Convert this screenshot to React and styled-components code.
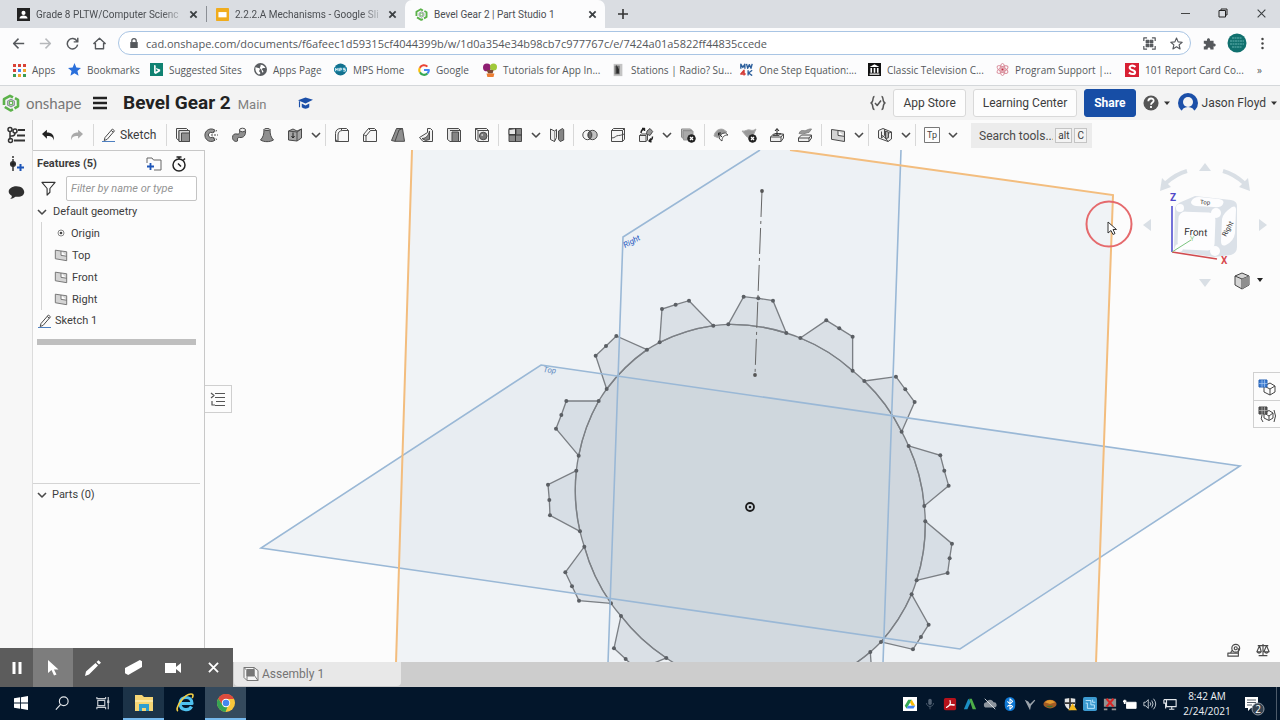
import styled, { createGlobalStyle, css } from 'styled-components';

const chromeFont = '"Open Sans", "Noto Sans", sans-serif';
const appFont = 'Roboto, "Liberation Sans", sans-serif';

const GlobalStyle = createGlobalStyle`
  * {
    box-sizing: border-box;
  }
  body {
    margin: 0;
    overflow: hidden;
  }
  button,
  input {
    font: inherit;
    color: inherit;
  }
  button {
    background: none;
    border: 0;
    padding: 0;
  }
  a {
    color: inherit;
    text-decoration: none;
  }
  svg {
    display: block;
    flex: none;
  }
`;

const Screen = styled.div`
  display: flex;
  flex-direction: column;
  height: 100vh;
  font-family: ${appFont};
  font-size: 12px;
  color: #3c3c3c;
  background: #fcfcfc;
`;

/* ---------- browser ---------- */

const TabStrip = styled.div`
  display: flex;
  flex: none;
  height: 28px;
  background: #dadde2;
  font-family: ${appFont};
  font-size: 10px;
  color: #4b4e52;
`;

const Tab = styled.div`
  display: flex;
  align-items: center;
  gap: 6px;
  width: ${props => props.$w}px;
  padding: 0 5px 0 ${props => props.$pad}px;
  ${props => props.$active && css`
    background: #fcfcfd;
    border-radius: 7px 7px 0 0;
  `}
  ${props => props.$divider && css`
    border-right: 1px solid #8b8f95;
    height: 16px;
    margin-top: 6px;
  `}
`;

const TabLabel = styled.span`
  flex: 1;
  min-width: 0;
  white-space: nowrap;
  ${props => props.$fade && css`
    mask-image: linear-gradient(to right, #000 88%, #0004);
  `}
`;

const IconButton = styled.button`
  display: flex;
  align-items: center;
  justify-content: center;
  flex: none;
  width: ${props => props.$w || 16}px;
  height: ${props => props.$h || 16}px;
`;

const WindowButtons = styled.div`
  display: flex;
  align-items: center;
  margin-left: auto;
  height: 26px;
`;

const AddressRow = styled.div`
  display: flex;
  align-items: center;
  flex: none;
  height: 30px;
  padding: 0 5px;
  background: #fcfcfd;
`;

const UrlBox = styled.div`
  display: flex;
  align-items: center;
  flex: 1;
  height: 24px;
  margin: 0 5px;
  padding: 0 0 0 10px;
  border: 1px solid #a9c5e4;
  border-radius: 12px;
  background: #fff;
  font-family: ${chromeFont};
  font-size: 11px;
`;

const UrlInput = styled.input`
  flex: 1;
  min-width: 0;
  margin-left: 7px;
  padding: 0;
  border: 0;
  outline: 0;
  background: none;
  color: #55585c;
`;

const Bookmarks = styled.nav`
  display: flex;
  align-items: center;
  flex: none;
  height: 28px;
  padding: 0 12px 4px;
  border-bottom: 1px solid #d4d7da;
  background: #fcfcfd;
  font-family: ${chromeFont};
  font-size: 10px;
  color: #55585b;
`;

const Bookmark = styled.a`
  display: flex;
  align-items: center;
  gap: 6px;
  flex: 0 0 ${props => props.$w}px;
  white-space: nowrap;
`;

/* ---------- document header ---------- */

const DocHeader = styled.header`
  display: flex;
  align-items: center;
  flex: none;
  height: 34px;
  padding: 0 2px;
  background: #f3f3f3;
`;

const Brand = styled.span`
  width: 66px;
  margin-left: 6px;
  font-family: Lato, sans-serif;
  font-size: 15px;
  color: #777;
`;

const DocTitle = styled.h1`
  margin: 0 7px 0 15px;
  font-size: 19px;
  line-height: 24px;
  font-weight: 700;
  color: #222;
`;

const Workspace = styled.span`
  width: 60px;
  padding-top: 3px;
  font-size: 13px;
  color: #808080;
`;

const HeaderRight = styled.div`
  display: flex;
  align-items: center;
  margin-left: auto;
`;

const HeaderButton = styled.button`
  height: 28px;
  margin-left: 7px;
  padding: 0 9px;
  border: 1px solid ${props => (props.$primary ? '#174ea6' : '#d9d9d9')};
  border-radius: 3px;
  background: ${props => (props.$primary ? '#174ea6' : '#fdfdfd')};
  color: ${props => (props.$primary ? '#fff' : '#3c3c3c')};
  font-weight: ${props => (props.$primary ? 700 : 400)};
`;

const UserButton = styled.button`
  display: flex;
  align-items: center;
  gap: 4px;
  margin-left: 7px;
`;

/* ---------- toolbar ---------- */

const Toolbar = styled.div`
  display: flex;
  align-items: stretch;
  flex: none;
  height: 30px;
  background: #fbfbfb;
`;

const RailHead = styled.div`
  display: flex;
  align-items: center;
  justify-content: center;
  width: 33px;
  border-right: 1px solid #d0d0d0;
  background: #f7f7f7;
`;

const ToolGroup = styled.div`
  display: flex;
  align-items: center;
  padding: 0 2px;
  border-right: 1px solid ${props => (props.$last ? 'transparent' : '#d8d8d8')};
  height: 22px;
  margin-top: 4px;
`;

const SketchButton = styled.button`
  display: flex;
  align-items: center;
  gap: 3px;
  width: 68px;
  padding-left: 5px;
`;

const SearchBox = styled.label`
  display: flex;
  align-items: center;
  gap: 2px;
  width: 121px;
  height: 25px;
  margin: 3px 0 0 8px;
  padding: 0 5px 0 8px;
  background: #ececec;
`;

const SearchInput = styled.input`
  flex: 1;
  min-width: 0;
  padding: 0;
  border: 0;
  outline: 0;
  background: none;
  &::placeholder {
    color: #4a4a4a;
    opacity: 1;
  }
`;

const Key = styled.kbd`
  padding: 0 2px;
  border: 1px solid #c4c4c4;
  background: #f3f3f3;
  font-family: ${appFont};
  font-size: 10px;
  line-height: 13px;
`;

/* ---------- workspace ---------- */

const Work = styled.main`
  display: flex;
  flex: 1;
  min-height: 0;
`;

const Rail = styled.div`
  display: flex;
  flex-direction: column;
  align-items: center;
  flex: none;
  width: 33px;
  border-right: 1px solid #dcdcdc;
  background: #f7f7f7;
`;

const Panel = styled.aside`
  display: flex;
  flex-direction: column;
  flex: none;
  width: 172px;
  border-top: 1px solid #c8c8c8;
  border-right: 1px solid #c8c8c8;
  background: #fcfcfc;
  font-size: 11px;
`;

const PanelHead = styled.div`
  display: flex;
  align-items: center;
  height: 25px;
  padding: 0 13px 0 4px;
`;

const PanelTitle = styled.h2`
  flex: 1;
  margin: 0;
  font-size: 11px;
  font-weight: 700;
`;

const FilterRow = styled.div`
  display: flex;
  align-items: center;
  gap: 10px;
  height: 25px;
  padding: 0 7px 0 8px;
`;

const FilterInput = styled.input`
  flex: 1;
  min-width: 0;
  height: 25px;
  padding: 0 4px;
  border: 1px solid #c4c4c4;
  border-radius: 2px;
  outline: 0;
  background: #fff;
  font-style: italic;
  &::placeholder {
    color: #949494;
    opacity: 1;
  }
`;

const Tree = styled.ul`
  margin: 0;
  padding: 0;
  list-style: none;
`;

const Branch = styled(Tree)`
  margin-left: 8px;
  border-left: 1px solid #d4d4d4;
`;

const TreeRow = styled.li`
  display: flex;
  align-items: center;
  gap: ${props => props.$gap || 4}px;
  height: ${props => (props.$parent ? 21 : 22)}px;
  padding-left: ${props => props.$indent}px;
`;

const RollbackBar = styled.div`
  flex: none;
  height: 6px;
  margin: 8px 8px 0 4px;
  background: #bfbfbf;
`;

const PartsHead = styled.div`
  display: flex;
  align-items: center;
  gap: 5px;
  height: 22px;
  margin: 138px 4px 0 0;
  padding-left: 4px;
  border-top: 1px solid #d4d4d4;
`;

const Viewport = styled.section`
  flex: 1;
  min-width: 0;
  position: relative;
  overflow: hidden;
`;

const Scene = styled.svg`
  width: 100%;
  height: 100%;
`;

const Floating = styled.div`
  position: absolute;
  top: ${props => props.$top}px;
  ${props => (props.$left === undefined ? `right: ${props.$right}px;` : `left: ${props.$left}px;`)}
`;

const ListTab = styled.button`
  display: flex;
  align-items: center;
  justify-content: center;
  width: 27px;
  height: 28px;
  border: 1px solid #cfcfcf;
  border-left: 0;
  background: #fcfcfc;
`;

const SideButtons = styled.div`
  display: flex;
  flex-direction: column;
  border: 1px solid #d0d0d0;
  border-right: 0;
  background: #fcfcfc;
`;

const SideButton = styled(IconButton)`
  width: 26px;
  height: 27px;
  & + & {
    border-top: 1px solid #d0d0d0;
  }
`;

const Measure = styled.div`
  display: flex;
  gap: 13px;
  position: absolute;
  right: 9px;
  bottom: 4px;
`;

const DocTabs = styled.div`
  display: flex;
  flex: none;
  height: 25px;
  padding-left: 234px;
  background: #cdcdcd;
`;

const DocTab = styled.button`
  display: flex;
  align-items: center;
  gap: 3px;
  width: 167px;
  height: 24px;
  padding-left: 9px;
  border-radius: 0 0 4px 4px;
  background: #e8e8e8;
  color: #747474;
`;

/* ---------- recorder and taskbar ---------- */

const Recorder = styled.div`
  display: flex;
  position: absolute;
  left: 0;
  bottom: 33px;
  height: 39px;
  background: #5c5c5c;
`;

const RecorderButton = styled.button`
  display: flex;
  align-items: center;
  justify-content: center;
  width: ${props => props.$w || 40}px;
  background: ${props => (props.$active ? '#7d7d7d' : 'none')};
`;

const Taskbar = styled.footer`
  display: flex;
  flex: none;
  height: 33px;
  background: #03162b;
  font-family: ${chromeFont};
  color: #eef1f4;
`;

const TaskButton = styled.button`
  display: flex;
  align-items: center;
  justify-content: center;
  width: 41px;
  border-bottom: 2px solid ${props => (props.$open ? '#76b9ed' : 'transparent')};
  background: ${props => (props.$open ? props.$open : 'none')};
`;

const Tray = styled.div`
  display: flex;
  align-items: center;
  margin-left: auto;
`;

const TrayButton = styled(IconButton)`
  width: 20px;
`;

const Clock = styled.time`
  display: flex;
  flex-direction: column;
  align-items: center;
  width: 54px;
  font-size: 10px;
  line-height: 15px;
`;

const Notice = styled.button`
  width: 43px;
  height: 33px;
  margin-right: 3px;
  padding-left: 10px;
  border-right: 1px solid #4c5a69;
`;

/* ---------- icons ---------- */

function Icon({ size = 16, box = 16, color = '#4a4a4a', width = 1, fill = 'none', children }) {
  return (
    <svg
      width={size}
      height={size}
      viewBox={`0 0 ${box} ${box}`}
      fill={fill}
      stroke={color}
      strokeWidth={width}
      strokeLinejoin="round"
      aria-hidden="true"
    >
      {children}
    </svg>
  );
}

const Cross = ({ size = 10, color = '#3c4043', width = 2 }) => (
  <Icon size={size} box={10} color={color} width={width}><path d="M1.5 1.5l7 7M8.5 1.5l-7 7" /></Icon>
);

const Caret = () => (
  <Icon size={10} box={10} color="#4a4a4a" width={1.6}><path d="M1 3l4 4 4-4" /></Icon>
);

const Triangle = () => (
  <Icon size={8} box={8} color="none" fill="#333"><path d="M1 2.5h6L4 6z" /></Icon>
);

const Logo = ({ size = 18 }) => (
  <Icon size={size} box={18} color="#5cb24a" width={2.6}>
    <path d="M2 11V5.2L8 1.8l3 1.6M13 4.2l3 1.7v6.4l-3.5 2M11 15.4l-2.4 1.1L2.8 13" />
    <path d="M9 5.3l3.300 1.900v3.700L9 12.800l-3.300-1.900V7.200z" stroke="#8b9299" strokeWidth="1.300" />
    <circle cx="9" cy="9" r="1.800" stroke="#5cb24a" strokeWidth="1.200" />
  </Icon>
);

const Pencil = () => (
  <Icon>
    <path d="M4 10.500L11.400 2l2.100 1.800-7.400 8.600-2.900 1.100zM10.200 3.400l2.100 1.800" />
    <path d="M1 14.500h13" stroke="#4d7fc0" />
  </Icon>
);

const tools = {
  extrude: <><path d="M1.500 1.500h10l2 2H4v10l-2.500-2z" fill="#f4f4f4" /><path d="M4 3.500h10.500v11H4z" fill="#d8d8d8" /><path d="M6.500 6h8v8.500h-8z" fill="#8f8f8f" /></>,
  revolve: <><path d="M12 3.200A6.300 6.300 0 1 0 12 13.200L9.600 10A2.600 2.600 0 1 1 9.600 6z" fill="#949494" /><path d="M8 8h7M10 5.500l4-2M10 10.500l4 2" strokeDasharray="2 1" /></>,
  sweep: <><path d="M1.500 10.500c0-3 2-4 4.500-3.500 3 .5 2.500-1.500 2.500-4h6c.5 5-1.500 8-6 7.500-2-.3-2 .5-2 3.500-1.500 1.200-5 0-5-3.500z" fill="#8f8f8f" /><ellipse cx="11.500" cy="3" rx="3" ry="1.800" fill="#eee" /></>,
  loft: <><path d="M5 2.500c0 5-1 8-3.500 10.500 3.500 2.200 9.500 2.200 13 0C12 10.500 11 7.500 11 2.500z" fill="#8f8f8f" /><ellipse cx="8" cy="2.500" rx="3" ry="1" fill="#ddd" /></>,
  thicken: <><path d="M1.500 4l4.500-2 4 2 4.500-2v9L10 14l-8.500-1z" fill="#a6a6a6" /><path d="M1.500 4l8.500 1 4.500-3M10 5v9" /><path d="M6 5.500v5M4.500 9L6 11l1.500-2" stroke="#222" /></>,
  fillet: <><path d="M1.500 14.500V6.500C1.500 3 4 1.500 6.500 1.500h6l2 2v11z" fill="#f7f7f7" /><path d="M4 14.500V8c0-3 2-4.500 4.500-4.500h6M1.500 12.500l2.500 2M6.500 1.500l2 2" /></>,
  chamfer: <><path d="M1.500 14.500V7.500l5-6h6l2 2v11z" fill="#f7f7f7" /><path d="M4 14.500V9l4.500-5.500h6M1.500 7.500L4 9M6.500 1.500l2 2" /></>,
  draft: <><path d="M1.500 13.500l5-12h6l2 12.800H5z" fill="#8f8f8f" /><path d="M5 14.300L9 3l3.500-1.500" /></>,
  rib: <><path d="M1.500 10.500l8-5V1.500h3l2 2v11H5z" fill="#f2f2f2" /><path d="M4 11.500c3.500 0 6.500-2.500 7.500-7.500v8.500l-4 1z" fill="#858585" /></>,
  shell: <><path d="M1.500 1.500h11l2 2v11H4l-2.500-2z" fill="#e4e4e4" /><path d="M4 3.500h10.500v11" /><path d="M6 5h6.500v9.500H6z" fill="#858585" /></>,
  hole: <><path d="M1.500 1.500h11l2 2v11H4l-2.500-2zM1.500 1.500L4 3.500v11M4 3.500h10.500" fill="#f2f2f2" /><circle cx="9.200" cy="9" r="3.800" fill="#777" /><circle cx="8.200" cy="8" r="1" fill="#ccc" stroke="none" /></>,
  pattern: <><path d="M2 1.500h12.500v13H2z" fill="#888" /><path d="M9 1.500v6H2v-5z" fill="#e6e6e6" /><path d="M2 8h12.500M8.500 1.500v13" stroke="#333" /></>,
  mirror: <><path d="M1.500 2l4 2v10.500l-4-2z" fill="#eee" /><path d="M5.500 4l2-1.500v8l-2 4" fill="#ddd" /><path d="M9.500 4l4-2.500 1.200 1v10.500l-3.500 1.500-1.700-2z" fill="#858585" /></>,
  boolean: <><circle cx="5.500" cy="8" r="4.700" fill="#f5f5f5" /><circle cx="10.500" cy="8" r="4.700" fill="#aaa" fillOpacity=".7" /><path d="M8 4c2 2.500 2 5.500 0 8-2-2.500-2-5.500 0-8z" fill="#777" /></>,
  split: <><path d="M1.500 3.500l2-2h11v10.800l-2 2.200h-11z" fill="#f5f5f5" /><path d="M1.500 3.500h11v11M12.500 3.500l2-2M1.500 11c4 0 4-2.500 7-2.500s3-1 6-1.500" /></>,
  transform: <><path d="M1.500 8.500l2-1.500h6v6l-1.500 1.500H1.500zM1.500 8.500H8v6" fill="#eee" /><path d="M9 4l3-2.500 2.700 3-2.700 4-3.500-1.500z" fill="#999" /><path d="M3 6c0-2 1-3.500 3-4M4 1.500h2.500V4M14.500 9.500c0 2-1 4-3.500 4.500M13 11.500l-2 2.500 2.500 1" stroke="#222" strokeWidth="1.400" /></>,
  deletePart: <><path d="M1.500 2h9l1.500 1.500h-9v8L1.500 10z" fill="#ccc" stroke="#888" /><path d="M3.500 4h9.500v9H3.500z" fill="#aaa" stroke="#999" /><circle cx="11.500" cy="11.500" r="3.800" fill="#222" stroke="#222" /><path d="M10 10l3 3m0-3l-3 3" stroke="#fff" strokeWidth="1.300" /></>,
  modifyFillet: <><path d="M1 9C2 4 6 1 10.500 2.500L14 5 9 7 5.500 11z" fill="#999" stroke="#aaa" /><path d="M9 14c0-4 2-6 6-6l-2.500-2c-4 0-6 2-6 6z" fill="#fff" /><path d="M9 10L5.500 6M5.500 8.500V6H8" stroke="#222" /></>,
  deleteFace: <><path d="M1 4c3 1 5-2 8-1s4 0 6-1l-4 9-5-1z" fill="#999" stroke="#aaa" /><circle cx="11.500" cy="11.500" r="3.800" fill="#222" stroke="#222" /><path d="M10 10l3 3m0-3l-3 3" stroke="#fff" strokeWidth="1.300" /></>,
  moveFace: <><path d="M1.500 10l3-3h10v4L12 14.500H1.500z" fill="#eee" /><path d="M1.500 10H12v4.500M12 10l2.500-3" /><path d="M4 8.500l2-2h6l-2 2z" fill="#999" /><path d="M8 8V2M6 4l2-2.500L10 4" stroke="#222" /></>,
  replaceFace: <><path d="M1.500 11l3-3h10v3L12 14.500H1.500zM1.500 11H12v3.500M12 11l2.500-3" fill="#eee" /><path d="M2 6.500c2-5 5-2 7-3s3-1.500 5.500-1.500L12 5.500c-3 0-4 2-10 1z" fill="#999" stroke="#888" /></>,
  plane: <path d="M1.500 2.500l13 1.800v10.200l-13-2.200zM8 3.400v5l6.500 1" fill="#d4d4d4" />,
  frame: <><path d="M1.500 3.500L6 1.500l8.500 3.500v7L11 14.500 1.500 11z" fill="#eee" /><path d="M4.500 4.500v6.500l3-2.500V2.200M8.500 4v7l2.500 3.500M8.500 7.500L14.500 5M4.500 8l4 3" /><path d="M8.500 4l3 1.200v5.500l-3 1z" fill="#aaa" /></>,
  custom: <><path d="M.500.500h15v15H.500z" fill="#fdfdfd" stroke="#777" /><text x="8" y="11" textAnchor="middle" fontSize="9" fill="#444" stroke="none">Tp</text></>,
};

const toolGroups = [
  { names: ['extrude', 'revolve', 'sweep', 'loft', 'thicken'], more: true },
  { names: ['fillet', 'chamfer', 'draft', 'rib', 'shell', 'hole'] },
  { names: ['pattern', null, 'mirror'] },
  { names: ['boolean', 'split', 'transform', null, 'deletePart'] },
  { names: ['modifyFillet', 'deleteFace', 'moveFace', 'replaceFace'] },
  { names: ['plane'], more: true },
  { names: ['frame'], more: true },
  { names: ['custom'], more: true },
];

const MoreButton = () => <IconButton $w={14} aria-label="More"><Caret /></IconButton>;

const bookmarks = [
  ['Apps', 56, <Icon box={14} size={14} color="none"><path d="M1 1h3v3H1zM1 6h3v3H1z" fill="#d94236" /><path d="M6 1h3v3H6zM11 1h3v3h-3z" fill="#d94236" /><path d="M6 6h3v3H6z" fill="#4285f4" /><path d="M11 6h3v3h-3zM6 11h3v3H6z" fill="#f2a52c" /><path d="M1 11h3v3H1zM11 11h3v3h-3z" fill="#3a9c54" /></Icon>],
  ['Bookmarks', 82, <Icon size={13} color="none" fill="#2a6fdb"><path d="M8 0l2.300 5.500 5.700.5-4.400 3.800 1.400 6L8 12.500 3 15.800l1.400-6L0 6l5.700-.5z" /></Icon>],
  ['Suggested Sites', 104, <Icon size={13} color="none"><path d="M0 0h16v16H0z" fill="#108272" /><path d="M5 2.500l2 .7v7.500l3-1.700-2-1-.7-2L12.500 8v2L7 13.500l-2-1.200z" fill="#fff" /></Icon>],
  ['Apps Page', 80, <Icon size={13} color="none"><circle cx="8" cy="8" r="8" fill="#5a5d61" /><path d="M2 5c3 2 4 0 5 2s-2 2 0 4 0 3-1 3C3 13 1 9 2 5zM8 2c3 0 5 2 6 4-2 1-3-1-4 1s3 2 1 5c-2-1-1-4-3-5s1-3 0-5z" fill="#fff" /></Icon>],
  ['MPS Home', 84, <Icon size={13} color="none"><circle cx="8" cy="8" r="7.500" fill="#12718f" /><path d="M0 5.500h16v5H0z" fill="#1c86a8" /><path d="M2 10V6.500l1.500 2 1.500-2V10M7 10V6.500h2v2H7M14 6.500h-2.500V8H14v2h-2.500" stroke="#fff" /></Icon>],
  ['Google', 65, <Icon size={12} width={2.8} color="#4285f4"><path d="M8 8h6.500A6.400 6.400 0 0 1 12.500 12.700" /><path d="M12.500 12.700A6.300 6.300 0 0 1 2.500 11" stroke="#34a853" /><path d="M2.500 11a6.300 6.300 0 0 1 0-6" stroke="#fbbc05" /><path d="M2.500 5a6.300 6.300 0 0 1 10-1.500" stroke="#ea4335" /></Icon>],
  ['Tutorials for App In...', 128, <Icon size={14} color="none"><circle cx="4.500" cy="5" r="4.500" fill="#8e1e72" /><circle cx="12" cy="4.500" r="4" fill="#a0c93a" /><path d="M4 8l8 0-1 4H6z" fill="#7c4a35" /><path d="M4 12h9l-1 4H5z" fill="#ed7d31" /></Icon>],
  ['Stations | Radio? Su...', 129, <Icon size={14} color="none"><path d="M3 1h10v14H3z" fill="#c4c4c4" /><path d="M4 3h6v10H4z" fill="#777" /><path d="M6 2l3 5v5H6z" fill="#2c2c2c" /></Icon>],
  ['One Step Equation:...', 128, <Icon size={13} color="#2c5f9c" width={1.7}><path d="M1 7V1.500l2.500 4 2.500-4V7M8 1l1.500 5.500L11.500 2l2 4.500L15 1M10 9v6.500M15 9l-4.500 3.300L15 15.500" /><path d="M5 15.500V9l-4 4.500h6" stroke="#d33b36" /></Icon>],
  ['Classic Television C...', 128, <Icon size={13} color="none"><path d="M0 0h16v16H0z" fill="#111" /><path d="M8 1.500L14 5H2zM3 6h2v6H3zM7 6h2v6H7zM11 6h2v6h-2zM2 13h12v1.500H2z" fill="#fff" /></Icon>],
  ['Program Support |...', 129, <Icon size={13} color="#d88a98" width={1.2}><ellipse cx="8" cy="8" rx="3" ry="7.500" /><ellipse cx="8" cy="8" rx="3" ry="7.500" transform="rotate(60 8 8)" /><ellipse cx="8" cy="8" rx="3" ry="7.500" transform="rotate(120 8 8)" /><circle cx="8" cy="8" r="1.500" fill="#c8283c" /></Icon>],
  ['101 Report Card Co...', 132, <Icon size={14} color="none"><path d="M0 0h16v16H0z" fill="#d81f33" /><path d="M12 4.500C9 2 4.500 3 5.500 6s6 1.500 6 4.500-4.500 2.500-7 .5" stroke="#fff" strokeWidth="2.400" /></Icon>],
];

/* ---------- model ---------- */

// gear teeth: root, tip, middle of the tip, tip, root
const teeth = [
  [[389, 184], [396, 84], [437, 71], [477, 59], [550, 134]],
  [[595, 130], [641, 47], [685, 52], [729, 59], [769, 156]],
  [[811, 171], [889, 118], [928, 142], [968, 167], [968, 269]],
  [[1003, 300], [1098, 287], [1126, 325], [1154, 363], [1115, 452]],
  [[1136, 495], [1231, 523], [1243, 569], [1256, 614], [1183, 675]],
  [[1186, 721], [1266, 788], [1259, 832], [1253, 876], [1160, 898]],
  [[1145, 940], [1196, 1031], [1173, 1068], [1149, 1105], [1053, 1083]],
  [[1021, 1113], [1028, 1212], [990, 1236], [950, 1260], [880, 1200]],
  [[409, 1131], [322, 1167], [287, 1134], [252, 1102], [273, 1005]],
  [[243, 967], [147, 959], [126, 916], [106, 874], [163, 797]],
  [[150, 751], [60, 703], [58, 657], [54, 611], [139, 569]],
  [[146, 524], [78, 443], [94, 402], [109, 360], [206, 360]],
  [[230, 324], [197, 224], [228, 195], [259, 165], [351, 206]],
];

const rim = teeth.flatMap(t => [t[0], t[4]]);
const rimPath = `M${rim[0]}` + rim.slice(1).map(p => `A540 540 0 0 1 ${p}`).join('') + `A540 540 0 0 1 ${rim[0]}`;

function Model() {
  return (
    <Scene viewBox="205 149 1075 513" preserveAspectRatio="xMinYMin slice" role="img" aria-label="Bevel gear sketch">
      <g fill="#d9e3ec" fillOpacity=".35">
        <path d="M412 149H790L1113 194 1096 662H396z" />
        <path d="M760 149L623 236 608 662H883L901 149z" fillOpacity=".1" />
        <path d="M541 364l699 101-280 183-699-101z" />
      </g>
      <g transform="translate(530 280) scale(.3333)" stroke="#7b7f84" strokeWidth="4">
        <path d={rimPath} fill="#b8c1c9" fillOpacity=".5" />
        {teeth.map((t, i) => (
          <path
            key={i}
            d={`M${t.join('L')}A540 540 0 0 0 ${t[0]}`}
            fill="#c3ccd4"
            fillOpacity=".45"
          />
        ))}
        {teeth.flat().map(([x, y]) => <circle key={`${x}-${y}`} cx={x} cy={y} r="6" fill="#5b5f64" stroke="none" />)}
      </g>
      <g fill="none" stroke="#9ab8d6" strokeWidth="1.600">
        <path d="M760 149L623 236 608 662M901 149L883 662" />
        <path d="M541 364l699 101-280 183-699-101z" />
      </g>
      <path d="M412 149L396 662M790 149L1113 194 1096 662" fill="none" stroke="#f3bd7e" strokeWidth="2" />
      <path d="M762 190L755 374" stroke="#666" strokeDasharray="26 4 3 4" />
      <circle cx="762" cy="190" r="1.900" fill="#555" />
      <circle cx="755" cy="374" r="1.900" fill="#555" />
      <circle cx="750" cy="506" r="4" fill="none" stroke="#1c1c1c" strokeWidth="1.800" />
      <circle cx="750" cy="506" r="1.300" fill="#1c1c1c" />
      <g fontSize="8" fontStyle="italic">
        <text x="625" y="247" transform="rotate(-28 625 247)" fill="#2358c0">Right</text>
        <text x="543" y="371" transform="rotate(6 543 371)" fill="#5c88c0">Top</text>
      </g>
    </Scene>
  );
}

const ViewCube = () => (
  <svg width="130" height="140" viewBox="1140 155 130 140" aria-label="View cube">
    <g fill="#d9dfe5">
      <path d="M1199 170l6-8 6 8zM1199 278h12l-6 8zM1151 218v12l-8-6zM1259 218v12l8-6z" />
      <path d="M1160 190l2-13 9 9zM1250 190l-2-13-9 9z" />
    </g>
    <path d="M1166 182q10-9 21-12M1244 182q-10-9-21-12" fill="none" stroke="#d9dfe5" strokeWidth="4" />
    <path d="M1175 207q1-4 6-6l14-6 36 4q6 1 6 6v41q0 6-6 8l-17 2-35-5q-5-1-5-6z" fill="#dbe1e8" />
    <g fill="#fdfdfe">
      <rect x="1178" y="211" width="37" height="38" rx="7" transform="rotate(2 1196 230)" />
      <path d="M1191 201q2-5 8-5l20 2q6 1 4 5-2 4-9 3l-18-1q-5-1-5-4zM1222 218q1-6 10-12 4-2 4 3l-1 23q-1 8-9 12-5 2-5-4z" />
      <circle cx="1180" cy="207" r="4" />
      <circle cx="1216" cy="212" r="5" />
      <circle cx="1215" cy="250" r="5" />
      <circle cx="1179" cy="247" r="4" />
    </g>
    <path d="M1172 251V205" stroke="#514fd0" strokeWidth="1.600" />
    <path d="M1172 251l45 7" stroke="#d14b4f" strokeWidth="1.600" />
    <path d="M1172 251l19-12" stroke="#7bc47e" />
    <g fontSize="10" fill="#333">
      <text x="1184" y="234" transform="rotate(3 1184 234)">Front</text>
      <text x="1200" y="203" fontSize="6" transform="rotate(4 1200 203)">Top</text>
      <text x="1226" y="236" fontSize="7" transform="rotate(-62 1226 236)">Right</text>
      <text x="1170" y="200" fontWeight="700" fill="#5048c8">Z</text>
      <text x="1221" y="263" fontWeight="700" fill="#d84a50">X</text>
      <text x="1190" y="240" fontSize="7" fill="#8fce92">Y</text>
    </g>
    <path d="M1235 275l7-3 7 3v9l-7 4-7-4z" fill="#d5d5d5" stroke="#444" />
    <path d="M1235 275l7 3 7-3M1242 278v10" fill="none" stroke="#444" />
    <path d="M1242 278l7-3v9l-7 4z" fill="#8f8f8f" />
    <path d="M1257 277h6l-3 4z" fill="#222" />
  </svg>
);

const Cursor = () => (
  <svg width="48" height="48" viewBox="0 0 48 48" aria-hidden="true">
    <circle cx="24" cy="24" r="22.500" fill="none" stroke="#e56a6d" strokeWidth="2" />
    <path d="M23 22v11l3-2.500 2 4 2-1-2-4h3.500z" fill="#fff" stroke="#333" />
  </svg>
);

const trayIcons = [
  ['Drive', <><path d="M0 0h16v16H0z" fill="#fff" /><path d="M6 3h4L6 10l-2 3-2-3z" fill="#34a853" /><path d="M10 3l4 7h-4L8 6z" fill="#fbbc05" /><path d="M4 13l2-3h8l-2 3z" fill="#4285f4" /></>],
  ['Microphone', <><rect x="6" y="2" width="4" height="7" rx="2" fill="#536274" /><path d="M4 7c0 5 8 5 8 0M8 11v3" stroke="#536274" /></>],
  ['Acrobat', <><rect x="1" y="1" width="14" height="14" rx="2" fill="#b5121b" /><path d="M4 12c4-2 5-5 4-8 0 4 2 6 5 5-3-1-6 0-9 3z" stroke="#fff" strokeWidth="1.300" /></>],
  ['Autodesk', <><path d="M1 14L6 2l3 3-4 9z" fill="#1c8fc4" /><path d="M7 2h3l5 12h-4z" fill="#4eae48" /></>],
  ['Offline', <><path d="M4 12a3 3 0 0 1 0-6c1-4 7-4 8 0a3 3 0 0 1 1 6z" fill="#8d959e" /><path d="M2 2l12 12" stroke="#dfe3e7" /></>],
  ['Bluetooth', <><rect x="2" y="0" width="12" height="16" rx="6" fill="#0f78d4" /><path d="M5 5l6 6-3 3V2l3 3-6 6" stroke="#fff" strokeWidth="1.200" /></>],
  ['Pointer', <path d="M2 3l4 2 2 3 5-5 1 1-5 6-1 5-2-4z" fill="#9ba3ab" />],
  ['Sync', <><ellipse cx="8" cy="8" rx="7.500" ry="5" fill="#a45c24" /><path d="M2 6q6-5 12 0l-6 2z" fill="#e09a32" /><path d="M3 10q5 4 9 0z" fill="#3b7133" /></>],
  ['Defender', <><path d="M2 2l6-1 6 1v5c0 4-3 6-6 8-3-2-6-4-6-8z" fill="#e4e4e4" /><path d="M8 1v14M2 7h12" stroke="#333" strokeWidth="2" /><path d="M11 7l5 8H6z" fill="#f4b91d" /></>],
  ['Display', <><rect x="0" y="0" width="16" height="16" rx="2" fill="#3c9ad0" /><path d="M3 4h6v5h4v4H5V7H3M11 3v3h3" stroke="#c9ebff" /></>],
  ['Network drive', <><path d="M1 2h14v9H1zM1 13h4v2H1zM10 13h5v2h-5z" fill="#929292" /><path d="M4 2l8 9M12 2l-8 9" stroke="#d72626" strokeWidth="2.400" /></>],
  ['Battery', <><path d="M4 6h11v7H4z" fill="#fff" stroke="#fff" /><path d="M0 5h4M2 3v5" stroke="#fff" strokeWidth="2" /></>],
  ['Volume', <path d="M1 6h2l3-3v10l-3-3H1zM8 6q2 2 0 4M10 4q3 4 0 8M12 2q5 6 0 12" stroke="#d4dae0" />],
  ['Network', <path d="M4 3h11v8H4zM7 14h6M10 11v3M1 3h3M1 3v4h2v6" stroke="#e2e6ea" strokeWidth="1.300" />],
];

export default function App() {
  return (
    <Screen>
      <GlobalStyle />

      <TabStrip>
        <Tab $w={207} $pad={17} $divider>
          <Icon size={13} color="none"><path d="M0 0h16v16H0z" fill="#222" /><circle cx="8" cy="6" r="2.500" fill="#fff" /><path d="M3 13c0-5 10-5 10 0z" fill="#fff" /></Icon>
          <TabLabel $fade>Grade 8 PLTW/Computer Science</TabLabel>
          <IconButton aria-label="Close tab"><Cross size={9} /></IconButton>
        </Tab>
        <Tab $w={198} $pad={9}>
          <Icon size={13} color="none"><rect width="16" height="16" rx="1" fill="#f0ac1d" /><path d="M3 5h10v6.500H3z" fill="#fff" /></Icon>
          <TabLabel $fade>2.2.2.A Mechanisms - Google Slid</TabLabel>
          <IconButton aria-label="Close tab"><Cross size={9} /></IconButton>
        </Tab>
        <Tab $w={200} $pad={10} $active>
          <Logo size={13} />
          <TabLabel>Bevel Gear 2 | Part Studio 1</TabLabel>
          <IconButton aria-label="Close tab"><Cross size={9} /></IconButton>
        </Tab>
        <IconButton $w={36} $h={28} aria-label="New tab">
          <Icon size={10} box={10} width={1.600} color="#333"><path d="M5 0v10M0 5h10" /></Icon>
        </IconButton>
        <WindowButtons>
          <IconButton $w={38} aria-label="Minimize"><Icon size={9} box={9} color="#444"><path d="M0 4.500h9" /></Icon></IconButton>
          <IconButton $w={38} aria-label="Restore"><Icon size={10} box={10} color="#222"><path d="M1 2.500h6.500V9H1zM3 2.500V1h6v6H7.500" /></Icon></IconButton>
          <IconButton $w={38} aria-label="Close"><Cross size={11} width={1} /></IconButton>
        </WindowButtons>
      </TabStrip>

      <AddressRow>
        <IconButton $w={27} aria-label="Back"><Icon size={13} color="#55585c" width={1.800}><path d="M15 8H2M8 2L2 8l6 6" /></Icon></IconButton>
        <IconButton $w={27} aria-label="Forward"><Icon size={13} color="#b6b8bb" width={1.800}><path d="M1 8h13M8 2l6 6-6 6" /></Icon></IconButton>
        <IconButton $w={27} aria-label="Reload"><Icon size={13} color="#55585c" width={1.800}><path d="M13.500 5A6.400 6.400 0 1 0 14.300 9.500M14.500 1v5h-5" /></Icon></IconButton>
        <IconButton $w={27} aria-label="Home"><Icon size={13} color="#55585c" width={1.700}><path d="M1 8l7-6.500L15 8h-2v6.500H3V8z" /></Icon></IconButton>
        <UrlBox>
          <Icon size={10} color="none" fill="#55585c"><path d="M2 6.500h12V16H2z" /><path d="M4.500 7V4.500a3.500 3.500 0 0 1 7 0V7" fill="none" stroke="#55585c" strokeWidth="2" /></Icon>
          <UrlInput aria-label="Address" defaultValue="cad.onshape.com/documents/f6afeec1d59315cf4044399b/w/1d0a354e34b98cb7c977767c/e/7424a01a5822ff44835ccede" />
          <IconButton $w={27} aria-label="QR code"><Icon size={13} color="#55585c" width={1.500}><path d="M1 5V1h4M11 1h4v4M15 11v4h-4M5 15H1v-4" /><path d="M4 4h3v3H4zM9 4h3v3H9zM4 9h3v3H4zM9 9h3v3H9z" fill="#55585c" /></Icon></IconButton>
          <IconButton $w={27} aria-label="Bookmark this page"><Icon size={13} color="#55585c" width={1.400}><path d="M8 1.200l2 4.800 5 .4-3.800 3.300 1.200 5L8 12l-4.400 2.700 1.200-5L1 6.400 6 6z" /></Icon></IconButton>
        </UrlBox>
        <IconButton $w={27} aria-label="Extensions"><Icon size={13} color="none" fill="#55585c"><path d="M1 4.500h4c-1-4 4.500-4 3.500 0H13V8c3.500-1 3.500 4.500 0 3.500V15.500H9c.8-3.500-4-3.500-3.200 0H1v-4c3.500.8 3.500-4 0-3.200z" /></Icon></IconButton>
        <IconButton $w={27} $h={20} aria-label="Profile"><Icon size={20} box={20} color="#7cc4c0" width={0.8}><circle cx="10" cy="10" r="9.500" fill="#10706e" stroke="none" /><path d="M5 5h10M3 8h14M3 11h14M5 14h10" strokeDasharray="2 .5" /></Icon></IconButton>
        <IconButton $w={25} aria-label="Menu"><Icon size={13} color="none" fill="#444"><circle cx="8" cy="2.500" r="1.500" /><circle cx="8" cy="8" r="1.500" /><circle cx="8" cy="13.500" r="1.500" /></Icon></IconButton>
      </AddressRow>

      <Bookmarks>
        {bookmarks.map(([label, w, icon]) => (
          <Bookmark key={label} href="#" $w={w}>{icon}{label}</Bookmark>
        ))}
        <span>»</span>
      </Bookmarks>

      <DocHeader>
        <Logo />
        <Brand>onshape</Brand>
        <IconButton aria-label="Document menu"><Icon size={14} box={14} color="#222" width={2.4}><path d="M0 2h14M0 7h14M0 12h14" /></Icon></IconButton>
        <DocTitle>Bevel Gear 2</DocTitle>
        <Workspace>Main</Workspace>
        <Icon size={15} color="none" fill="#1b4fa8"><path d="M8 1.500l8 2.500-8 4-8-3.500zM4 8l4 2 4-2v4c-2 2-6 2-8 0zM1 5.500h1.200V12H1z" /></Icon>
        <HeaderRight>
          <IconButton aria-label="Variables"><Icon color="#555" width={1.5}><path d="M4.500 1.500C2 1.500 4 7 1 8c3 1 .5 6.500 3.500 6.500M11.500 1.500C14 1.500 12 7 15 8c-3 1-.5 6.500-3.500 6.500M5 8l2.200 2.500L11 5.500" /></Icon></IconButton>
          <HeaderButton>App Store</HeaderButton>
          <HeaderButton>Learning Center</HeaderButton>
          <HeaderButton $primary>Share</HeaderButton>
          <UserButton aria-label="Help">
            <Icon box={18} color="none"><circle cx="9" cy="9" r="8.500" fill="#555" /><path d="M6 7c0-4 6-4 6-.5 0 2-3 2-3 4.500M9 12.500v2" stroke="#fff" strokeWidth="2" /></Icon>
            <Triangle />
          </UserButton>
          <UserButton>
            <Icon size={20} box={20} color="none"><circle cx="10" cy="10" r="10" fill="#1b4fa8" /><circle cx="10" cy="9" r="5" fill="#f3f3f3" /><path d="M3 20q1-6 7-6t7 6z" fill="#f3f3f3" /></Icon>
            Jason Floyd
            <Triangle />
          </UserButton>
        </HeaderRight>
      </DocHeader>

      <Toolbar>
        <RailHead>
          <Icon size={18} box={18} color="#333" width={1.5}><circle cx="3" cy="3.500" r="2" /><path d="M3 5.500v8M3 10h2q3 0 3-3" /><circle cx="8" cy="5" r="2" /><circle cx="3.500" cy="14.500" r="2" /><path d="M11 4h7M10 9.500h8M7 14.500h11" strokeWidth="1.800" /></Icon>
        </RailHead>
        <ToolGroup>
          <IconButton $w={26} aria-label="Undo"><Icon size={13} color="none" fill="#222"><path d="M0 6l6-5v3.200c6 0 9.500 3 8.500 9.800-1-4-3-5.500-8.500-5.300V12z" /></Icon></IconButton>
          <IconButton $w={30} aria-label="Redo"><Icon size={13} color="none" fill="#aaa"><path d="M16 6l-6-5v3.200C4 4.200.5 7.200 1.500 14c1-4 3-5.500 8.500-5.300V12z" /></Icon></IconButton>
        </ToolGroup>
        <ToolGroup>
          <SketchButton><Pencil />Sketch</SketchButton>
        </ToolGroup>
        {toolGroups.map((group, i) => (
          <ToolGroup key={i} $last={i === toolGroups.length - 1}>
            {group.names.map((name, j) => (
              name ? <IconButton key={name} $w={28} aria-label={name}><Icon>{tools[name]}</Icon></IconButton> : <MoreButton key={j} />
            ))}
            {group.more && <MoreButton />}
          </ToolGroup>
        ))}
        <SearchBox>
          <SearchInput placeholder="Search tools..." aria-label="Search tools" />
          <Key>alt</Key>
          <Key>C</Key>
        </SearchBox>
      </Toolbar>

      <Work>
        <Rail>
          <IconButton $w={32} $h={28} aria-label="Insert feature"><Icon color="#333" width={1.5}><path d="M5 0v3M5 13v3" strokeDasharray="2 1" /><path d="M5 3v10" /><circle cx="5" cy="8" r="2.300" fill="#222" /><path d="M12.500 8v7M9 11.500h7" stroke="#1d55b8" strokeWidth="2" /></Icon></IconButton>
          <IconButton $w={32} $h={28} aria-label="Comments"><Icon size={17} color="none" fill="#2f2f2f"><path d="M8 2c9 0 10 10 1 10H7q-2 2-5 2 2-1 1.500-3C-2 8 1 2 8 2z" /></Icon></IconButton>
        </Rail>

        <Panel>
          <PanelHead>
            <PanelTitle>Features (5)</PanelTitle>
            <IconButton $w={25} aria-label="Add folder"><Icon color="#666"><path d="M1 7V2h5l1.500 2H15v10H8" /><path d="M4.500 7v7M1 10.500h7" stroke="#1d55b8" strokeWidth="1.800" /></Icon></IconButton>
            <IconButton $w={25} aria-label="Regeneration times"><Icon color="#222" width={1.5}><circle cx="8" cy="9" r="6" /><path d="M8 3V1M5.500 1h5M12.500 4l1.500-1.500M7 7.500l3 3" /></Icon></IconButton>
          </PanelHead>
          <FilterRow>
            <Icon size={15} color="#333" width={1.2}><path d="M1 1.500h14L9.500 8v4L6.500 15V8z" /></Icon>
            <FilterInput placeholder="Filter by name or type" aria-label="Filter by name or type" />
          </FilterRow>
          <Tree>
            <TreeRow $indent={4} $gap={6} $parent><Caret />Default geometry</TreeRow>
            <Branch>
              <TreeRow $indent={11} $gap={2}>
                <Icon><circle cx="8" cy="8" r="3" stroke="#888" /><circle cx="8" cy="8" r="1.300" fill="#444" stroke="none" /></Icon>
                Origin
              </TreeRow>
              <TreeRow $indent={12}><Icon size={14} color="#6a6a6a">{tools.plane}</Icon>Top</TreeRow>
              <TreeRow $indent={12}><Icon size={14} color="#6a6a6a">{tools.plane}</Icon>Front</TreeRow>
              <TreeRow $indent={12}><Icon size={14} color="#6a6a6a">{tools.plane}</Icon>Right</TreeRow>
            </Branch>
            <TreeRow $indent={4} $gap={2} $parent><Pencil />Sketch 1</TreeRow>
          </Tree>
          <RollbackBar />
          <PartsHead><Caret />Parts (0)</PartsHead>
        </Panel>

        <Viewport>
          <Model />
          <Floating $top={235} $left={0}>
            <ListTab aria-label="Toggle list"><Icon color="#555" width={1.2}><path d="M5 2.500h10M5 6.500h10M6 10.500h9M5 14.500h10M1 2l3 2.500L1 7M2 10v4h3" /></Icon></ListTab>
          </Floating>
          <Floating $top={6} $right={10}><ViewCube /></Floating>
          <Floating $top={50} $left={880}><Cursor /></Floating>
          <Floating $top={222} $right={0}>
            <SideButtons>
              <SideButton aria-label="Appearance"><Icon size={18} box={18} color="#444"><path d="M6 8l6-3 5 3v6l-5 3-6-3zM6 8l6 3 5-3M12 11v6" /><path d="M1 2h8v7H1z" fill="#3d7cd0" stroke="#2460b4" /><path d="M1 5.500h8M4 2v7M6.500 2v7" stroke="#bcd5f5" strokeWidth=".6" /></Icon></SideButton>
              <SideButton aria-label="Configurations"><Icon size={18} box={18} color="#444"><path d="M6 8l5-2.500L15 8v5l-4 2.500L6 13zM6 8l5 3 4-3M11 11v4M4 10q-2 4 1 7M16 5q3 6 0 12" /><path d="M1 2h8v7H1z" fill="#555" /><path d="M1 5.500h8M4 2v7M6.500 2v7" stroke="#ccc" strokeWidth=".6" /></Icon></SideButton>
            </SideButtons>
          </Floating>
          <Measure>
            <IconButton aria-label="Measure"><Icon size={14} width={1.3}><path d="M1 11.500h12V15H1zM13 15V6M4 11.500q1-3 3-3" /><circle cx="10" cy="6" r="4.500" /><circle cx="10" cy="6" r="1.700" /></Icon></IconButton>
            <IconButton aria-label="Mass properties"><Icon size={14} width={1.3}><path d="M2 3h12M8 1v13M3 14.500h10M4 3l-3 7h5zM12 3l-3 7h6zM1 10q2.500 3 5 0M9.500 10q2.500 3 5 0" /></Icon></IconButton>
          </Measure>
        </Viewport>
      </Work>

      <DocTabs>
        <DocTab><Icon color="#777"><path d="M1 1.500h10l4 3v10H4l-3-3z" fill="#f5f5f5" /><path d="M11 1.500v7.500l4 5.500M1 1.500l3 3v10" /><path d="M4 3.500h7V10H4z" fill="#777" /></Icon>Assembly 1</DocTab>
      </DocTabs>

      <Taskbar>
        <TaskButton aria-label="Start"><Icon size={14} color="none" fill="#fff"><path d="M0 2.500L7 1.500v6H0zM8 1.300L16 0v7.500H8zM0 8.500h7v6l-7-1zM8 8.500h8V16l-8-1.300z" /></Icon></TaskButton>
        <TaskButton aria-label="Search"><Icon size={14} color="#e5e8eb" width={1.3}><circle cx="10" cy="6" r="5" /><path d="M6.500 9.500L1 15.500" /></Icon></TaskButton>
        <TaskButton aria-label="Task view"><Icon size={14} color="#c9ced4" width={1.3}><path d="M2 5h8v6H2zM1 1v2h10V1M1 15v-2h10v2M14 1v14" /><path d="M14 5v3" strokeWidth="2.500" /></Icon></TaskButton>
        <TaskButton $open="#1c3348" aria-label="File Explorer"><Icon size={20} box={20} color="none"><path d="M1 2h7l2 2h9v14H1z" fill="#f6d675" /><path d="M1 7h18v2H1z" fill="#fbe7a2" /><path d="M5 18v-7h10v7h-3v-3H8v3z" fill="#2f9fd0" /></Icon></TaskButton>
        <TaskButton aria-label="Internet Explorer"><Icon size={20} box={20} color="#4fc1ee" width={3.2}><path d="M5 10.500h12c0-8-12-8-12 0 0 7 9 8 11.500 3" /><path d="M3 18C-1 16 9 1 16 1c3 0 2 3 1 4" stroke="#f3cf45" strokeWidth="1.600" /></Icon></TaskButton>
        <TaskButton $open="#354a5d" aria-label="Chrome"><Icon size={20} box={20} color="none"><circle cx="10" cy="10" r="9" fill="#f9c73b" /><path d="M2.200 5.500A9 9 0 0 1 18 6H10a4 4 0 0 0-3.500 6z" fill="#dd4b3e" /><path d="M2.200 5.500L6.500 12a4 4 0 0 0 5 1.700L9.500 19A9 9 0 0 1 2.200 5.500z" fill="#35a354" /><circle cx="10" cy="10" r="4.200" fill="#fff" /><circle cx="10" cy="10" r="3.300" fill="#4587ee" /></Icon></TaskButton>
        <Tray>
          {trayIcons.map(([name, icon]) => (
            <TrayButton key={name} aria-label={name}><Icon size={14} color="none">{icon}</Icon></TrayButton>
          ))}
          <Clock><span>8:42 AM</span><span>2/24/2021</span></Clock>
          <Notice aria-label="2 notifications">
            <svg width="22" height="24" viewBox="0 0 22 24">
              <path d="M1 5h13v11H7l-3 3v-3H1z" fill="#fff" />
              <path d="M3 8h9M3 10.500h9M3 13h5" stroke="#56606b" />
              <circle cx="14" cy="17" r="6" fill="#35414e" stroke="#8d97a2" />
              <text x="14" y="21" textAnchor="middle" fontSize="10" fill="#fff">2</text>
            </svg>
          </Notice>
        </Tray>
      </Taskbar>

      <Recorder>
        <RecorderButton $w={33} aria-label="Pause"><Icon color="#fff" width={3}><path d="M5 2v12M11 2v12" /></Icon></RecorderButton>
        <RecorderButton $active aria-label="Pointer"><Icon color="none" fill="#fff"><path d="M3 0v13l3.500-3L9 15.500l2.500-1L9 9.500h4.500z" /></Icon></RecorderButton>
        <RecorderButton aria-label="Draw"><Icon color="none" fill="#fff"><path d="M0 16l1-4.500L10.500 3 13 5.500 4 14.500zM11.500 2L13.500.3 16 2.800l-2 1.700z" /></Icon></RecorderButton>
        <RecorderButton aria-label="Erase"><Icon size={17} color="none" fill="#fff"><path d="M0 8.500L14 1l2 1v5.500L3 15l-3-1.500z" /></Icon></RecorderButton>
        <RecorderButton aria-label="Camera"><Icon color="none" fill="#fff"><path d="M0 3h11v10H0zM11 7l5-4v10l-5-4z" /></Icon></RecorderButton>
        <RecorderButton aria-label="Close recorder"><Cross size={13} color="#fff" width={1.4} /></RecorderButton>
      </Recorder>
    </Screen>
  );
}
